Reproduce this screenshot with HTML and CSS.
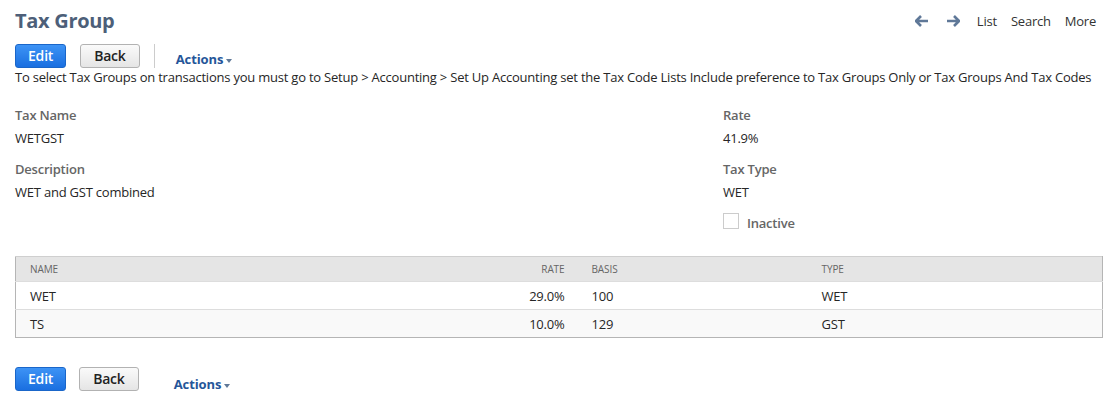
FILE: index.html
```html
<!DOCTYPE html>
<html lang="en">
<head>
    <meta charset="UTF-8">
    <title>Tax Group</title>
    <link rel="stylesheet" href="styles.css">
</head>
<body>
    <div class="page">
        <header class="page-head">
            <h1>Tax Group</h1>
            <nav class="head-nav">
                <span class="arrow">
                    <svg width="14" height="12" viewBox="0 0 14 12"><path d="M6 1 L1 6 L6 11 M1.5 6 H13" fill="none" stroke="#5f7898" stroke-width="2.6" stroke-linejoin="round"/></svg>
                </span>
                <span class="arrow">
                    <svg width="14" height="12" viewBox="0 0 14 12"><path d="M8 1 L13 6 L8 11 M12.5 6 H1" fill="none" stroke="#5f7898" stroke-width="2.6" stroke-linejoin="round"/></svg>
                </span>
                <a>List</a>
                <a>Search</a>
                <a>More</a>
            </nav>
        </header>

        <div class="toolbar">
            <button class="btn btn-primary">Edit</button>
            <button class="btn">Back</button>
            <span class="divider"></span>
            <span class="actions">Actions <span class="caret"></span></span>
        </div>

        <p class="notice">To select Tax Groups on transactions you must go to Setup &gt; Accounting &gt; Set Up Accounting set the Tax Code Lists Include preference to Tax Groups Only or Tax Groups And Tax Codes</p>

        <div class="fields">
            <div class="field-col">
                <div class="field">
                    <div class="label">Tax Name</div>
                    <div class="value">WETGST</div>
                </div>
                <div class="field">
                    <div class="label">Description</div>
                    <div class="value">WET and GST combined</div>
                </div>
            </div>
            <div class="field-col">
                <div class="field">
                    <div class="label">Rate</div>
                    <div class="value">41.9%</div>
                </div>
                <div class="field">
                    <div class="label">Tax Type</div>
                    <div class="value">WET</div>
                </div>
                <div class="check">
                    <span class="box"></span>
                    <span class="label">Inactive</span>
                </div>
            </div>
        </div>

        <table class="grid">
            <thead>
                <tr>
                    <th class="c-name">Name</th>
                    <th class="c-rate">Rate</th>
                    <th class="c-basis">Basis</th>
                    <th class="c-type">Type</th>
                </tr>
            </thead>
            <tbody>
                <tr>
                    <td class="c-name">WET</td>
                    <td class="c-rate">29.0%</td>
                    <td class="c-basis">100</td>
                    <td class="c-type">WET</td>
                </tr>
                <tr class="alt">
                    <td class="c-name">TS</td>
                    <td class="c-rate">10.0%</td>
                    <td class="c-basis">129</td>
                    <td class="c-type">GST</td>
                </tr>
            </tbody>
        </table>

        <div class="toolbar toolbar-bottom">
            <button class="btn btn-primary">Edit</button>
            <button class="btn">Back</button>
            <span class="actions">Actions <span class="caret"></span></span>
        </div>
    </div>
</body>
</html>
```

FILE: styles.css
```css
body {
    margin: 0;
    font-family: "Open Sans", Arial, sans-serif;
    font-size: 13px;
    letter-spacing: -0.22px;
    color: #262626;
    background-color: #fff;
}

.page {
    padding: 0 20px 0 15px;
}

.page-head {
    display: flex;
    justify-content: space-between;
    align-items: center;
    height: 40px;
}

.page-head h1 {
    margin: 0;
    font-size: 20px;
    font-weight: 700;
    color: #4d5f79;
    letter-spacing: -0.3px;
}

.head-nav {
    display: flex;
    align-items: center;
    gap: 14px;
    padding-top: 1px;
}

.head-nav .arrow {
    display: flex;
    margin-right: 3px;
}

.head-nav a {
    color: #333;
    font-size: 13px;
}

.toolbar {
    display: flex;
    align-items: center;
    gap: 14px;
    height: 24px;
    margin-top: 4px;
}

.btn {
    font-family: "Open Sans", Arial, sans-serif;
    font-size: 14px;
    font-weight: 600;
    letter-spacing: -0.2px;
    height: 24px;
    padding: 0 13px;
    border: 1px solid #b2b2b2;
    border-radius: 3px;
    background: linear-gradient(#fafafa, #e5e5e5);
    color: #222;
    line-height: 20px;
}

.btn-primary {
    padding: 0 12px;
    border-color: #1a66c9;
    background: linear-gradient(#3d93f5, #1a6fe0);
    color: #fff;
}

.divider {
    width: 1px;
    height: 24px;
    background-color: #ccc;
}

.actions {
    align-self: flex-end;
    margin-left: 7px;
    font-size: 13px;
    font-weight: 700;
    line-height: 17px;
    letter-spacing: -0.1px;
    color: #255599;
}

.caret {
    display: inline-block;
    width: 0;
    height: 0;
    border-left: 3.5px solid transparent;
    border-right: 3.5px solid transparent;
    border-top: 4px solid #5f7898;
    vertical-align: middle;
    margin-left: -1px;
}

.notice {
    margin: 0;
    line-height: 18px;
    color: #262626;
}

.fields {
    display: flex;
    margin-top: 20px;
}

.field-col {
    width: 708px;
}

.field-col + .field-col {
    width: auto;
}

.field {
    margin-bottom: 13px;
}

.label {
    font-weight: 600;
    color: #666;
    line-height: 18px;
}

.value {
    line-height: 18px;
    margin-top: 5px;
}

.check {
    display: flex;
    align-items: center;
    gap: 8px;
    margin-top: -1px;
}

.box {
    width: 14px;
    height: 14px;
    margin-bottom: 4px;
    border: 1px solid #ccc;
    background-color: #fff;
}

.grid {
    width: 1088px;
    margin-top: 23px;
    table-layout: fixed;
    border-collapse: collapse;
    border: 1px solid #b5b5b5;
    border-top-color: #cfcfcf;
}

.grid th,
.grid td {
    box-sizing: border-box;
    padding: 0;
}

.grid th {
    height: 25px;
    background-color: #e5e5e5;
    font-size: 10px;
    font-weight: 400;
    letter-spacing: -0.1px;
    color: #666;
    text-transform: uppercase;
    text-align: left;
}

.grid td {
    height: 28px;
    border-top: 1px solid #ddd;
    line-height: 18px;
}

.grid tr.alt td {
    background-color: #f9f9f9;
}

.grid .c-name {
    padding-left: 14px;
    width: 510px;
}

.grid .c-rate {
    text-align: right;
    width: 39px;
}

.grid .c-basis {
    padding-left: 27px;
    width: 257px;
}

.toolbar-bottom {
    margin-top: 29px;
    gap: 13px;
}

.toolbar-bottom .actions {
    margin-left: 22px;
    margin-bottom: -2px;
}
```
